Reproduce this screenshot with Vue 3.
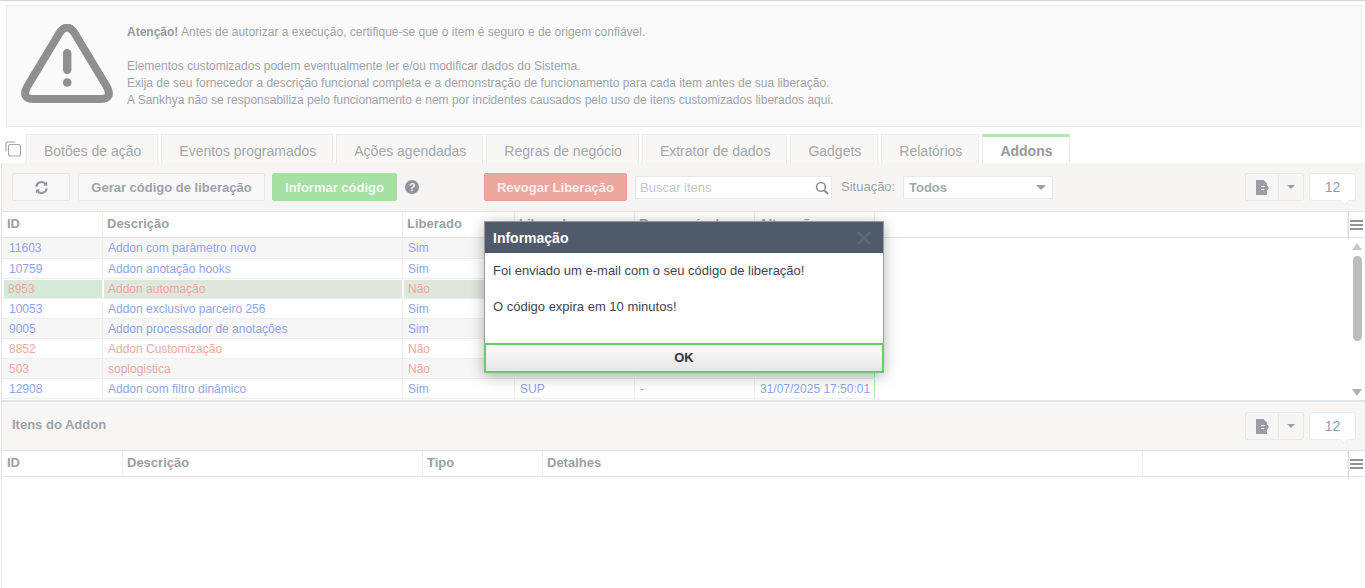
<script setup>
const tabs = ['Botões de ação', 'Eventos programados', 'Ações agendadas', 'Regras de negócio', 'Extrator de dados', 'Gadgets', 'Relatórios', 'Addons']
const cols = ['ID', 'Descrição', 'Liberado', 'Liberado por', 'Responsável', 'Alteração']
const rows = [
  { id: '11603', d: 'Addon com parâmetro novo', l: 'Sim', cls: 'alt first' },
  { id: '10759', d: 'Addon anotação hooks', l: 'Sim', cls: '' },
  { id: '8953', d: 'Addon automação', l: 'Não', cls: 'no sel' },
  { id: '10053', d: 'Addon exclusivo parceiro 256', l: 'Sim', cls: '' },
  { id: '9005', d: 'Addon processador de anotações', l: 'Sim', cls: 'alt' },
  { id: '8852', d: 'Addon Customização', l: 'Não', cls: 'no' },
  { id: '503', d: 'soplogistica', l: 'Não', cls: 'no alt' },
  { id: '12908', d: 'Addon com filtro dinâmico', l: 'Sim', cls: '', a: 'SUP', b: '-', c: '31/07/2025 17:50:01' },
]
const cols2 = ['ID', 'Descrição', 'Tipo', 'Detalhes', '']
</script>

<template>
  <div class="page">
    <section class="warn">
      <svg class="warn-icon" viewBox="21 24 92 80" width="92" height="80">
        <path d="M59.5 33Q67 22 74.5 33L107 87Q113 99 100 99L34 99Q21 99 27 87Z" fill="none" stroke="#8f8f8f" stroke-width="8" stroke-linejoin="round" />
        <rect x="63" y="49" width="8.4" height="25" rx="4.2" fill="#8f8f8f" />
        <circle cx="67.2" cy="82.5" r="4.3" fill="#8f8f8f" />
      </svg>
      <div class="warn-text">
        <p><b>Atenção!</b> Antes de autorizar a execução, certifique-se que o item é seguro e de origem confiável.</p>
        <p class="gap">Elementos customizados podem eventualmente ler e/ou modificar dados do Sistema.</p>
        <p>Exija de seu fornecedor a descrição funcional completa e a demonstração de funcionamento para cada item antes de sua liberação.</p>
        <p>A Sankhya não se responsabiliza pelo funcionamento e nem por incidentes causados pelo uso de itens customizados liberados aqui.</p>
      </div>
    </section>

    <nav class="tabs">
      <svg class="copy" viewBox="0 0 16 16" width="16" height="16" fill="none" stroke="#a2a4a8" stroke-width="1.1">
        <path d="M1 10.500V3A2 2 0 0 1 3 1H10.500" />
        <rect x="3.500" y="3.500" width="12" height="11.500" rx="2" fill="#fff" />
      </svg>
      <div v-for="t in tabs" :key="t" class="tab" :class="{ active: t === 'Addons' }">{{ t }}</div>
    </nav>

    <main class="panel">
      <div class="toolbar">
        <button class="btn refresh">
          <svg viewBox="0 0 16 16" width="15" height="15" fill="none" stroke="#92959b" stroke-width="2.200">
            <path d="M2.500 7A5.600 5.600 0 0 1 12.500 4.300" />
            <path d="M13.500 9A5.600 5.600 0 0 1 3.500 11.700" />
            <path d="M14 1.500V6H9.700L14 1.500ZM2 14.500V10H6.300L2 14.500Z" fill="#92959b" stroke="none" />
          </svg>
        </button>
        <button class="btn gerar">Gerar código de liberação</button>
        <button class="btn informar">Informar código</button>
        <span class="help">?</span>
        <button class="btn revogar">Revogar Liberação</button>
        <div class="search">
          <span>Buscar itens</span>
          <svg viewBox="0 0 16 16" width="14" height="14" fill="none" stroke="#8d9096" stroke-width="1.800">
            <circle cx="6.800" cy="6.800" r="5" />
            <path d="M10.500 10.500L14.800 14.800" stroke-width="2.400" />
          </svg>
        </div>
        <span class="sit">Situação:</span>
        <div class="select"><span>Todos</span><i class="caret big"></i></div>
        <div class="right-tools">
          <div class="split">
            <span class="split-a">
              <svg viewBox="0 0 13 15" width="13" height="15">
                <path d="M0 0H7.500L11 3.500V5L13 8L11 11V15H0Z" fill="#9a9da6" />
                <path d="M5 6.500H9M5 9.500H8" stroke="#f6f5f4" stroke-width="1" />
              </svg>
            </span>
            <span class="split-b"><i class="caret"></i></span>
          </div>
          <div class="count">12</div>
        </div>
      </div>

      <div class="tbl top-tbl">
        <div class="thead">
          <div v-for="c in cols" :key="c" class="th">{{ c }}</div>
          <div class="th fill"></div>
          <div class="menu"><i></i><i></i><i></i></div>
        </div>
        <div class="tbody">
          <div v-for="r in rows" :key="r.id" class="tr" :class="r.cls">
            <div class="td">{{ r.id }}</div>
            <div class="td">{{ r.d }}</div>
            <div class="td">{{ r.l }}</div>
            <div class="td">{{ r.a }}</div>
            <div class="td">{{ r.b }}</div>
            <div class="td last">{{ r.c }}</div>
          </div>
          <div class="scrollbar">
            <i class="up"></i>
            <i class="thumb"></i>
            <i class="down"></i>
          </div>
        </div>
      </div>

      <div class="toolbar second">
        <h2>Itens do Addon</h2>
        <div class="right-tools">
          <div class="split">
            <span class="split-a">
              <svg viewBox="0 0 13 15" width="13" height="15">
                <path d="M0 0H7.500L11 3.500V5L13 8L11 11V15H0Z" fill="#9a9da6" />
                <path d="M5 6.500H9M5 9.500H8" stroke="#f6f5f4" stroke-width="1" />
              </svg>
            </span>
            <span class="split-b"><i class="caret"></i></span>
          </div>
          <div class="count">12</div>
        </div>
      </div>
      <div class="tbl items">
        <div class="thead">
          <div v-for="(c, i) in cols2" :key="i" class="th">{{ c }}</div>
          <div class="menu"><i></i><i></i><i></i></div>
        </div>
      </div>
    </main>

    <div class="modal">
      <header class="modal-head">
        <span>Informação</span>
        <svg viewBox="0 0 14 14" width="14" height="14" stroke="#5f6a7a" stroke-width="2.400">
          <path d="M1 1L13 13M13 1L1 13" />
        </svg>
      </header>
      <div class="modal-body">
        <p>Foi enviado um e-mail com o seu código de liberação!</p>
        <p>O código expira em 10 minutos!</p>
      </div>
      <button class="ok">OK</button>
    </div>
  </div>
</template>

<style>
html, body { margin: 0; background: #fff; }
</style>

<style scoped>
.page {
  position: relative;
  width: 1365px;
  height: 588px;
  overflow: hidden;
  box-sizing: border-box;
  border-top: 1px solid #d6d6d6;
  background: #fff;
  font-family: "Liberation Sans", Arial, sans-serif;
  font-size: 12px;
  color: #a0a3a9;
}
p { margin: 0; }
button { font-family: inherit; cursor: default; }

.warn {
  display: flex;
  box-sizing: border-box;
  height: 122px;
  margin: 4px 3px 0 6px;
  border: 1px solid #e8e8e8;
  background: #fafafa;
}
.warn-icon { margin: 18px 0 0 14px; flex: none; }
.warn-text { margin: 18px 0 0 14px; line-height: 17px; }
.warn-text b { color: #96999f; }
.warn-text .gap { margin-top: 17px; }

.tabs {
  display: flex;
  align-items: stretch;
  height: 29px;
  margin-top: 7px;
  padding-left: 5px;
}
.copy { flex: none; margin: 7px 5px 0 0; }
.tab {
  box-sizing: border-box;
  padding: 7px 16px 0 17px;
  margin-right: 3px;
  border: 1px solid #ebebeb;
  border-bottom: 0;
  background: #f8f7f6;
  font-size: 14px;
  line-height: 18px;
  color: #a4a7ac;
  white-space: nowrap;
}
.tab.active {
  border-top: 3px solid #b3e8ac;
  padding: 5px 17px 0;
  background: #fff;
  font-weight: 700;
  color: #96999f;
}

.panel {
  margin-left: 1px;
  height: 425px;
  border-left: 1px solid #e2e2e2;
}
.toolbar {
  display: flex;
  align-items: flex-start;
  box-sizing: border-box;
  height: 48px;
  padding: 10px 9px 0 10px;
  background: #f6f5f4;
}
.btn {
  box-sizing: border-box;
  height: 28px;
  padding: 0;
  border: 1px solid #e8e8e8;
  border-radius: 2px;
  background: #f8f8f8;
  font-size: 13px;
  font-weight: 700;
  color: #a0a3a8;
}
.refresh { width: 58px; display: flex; align-items: center; justify-content: center; }
.gerar { width: 187px; margin-left: 8px; }
.informar { width: 125px; margin-left: 7px; background: #a6e0a2; border-color: #a6e0a2; color: #f2faf0; }
.help {
  width: 14px;
  height: 14px;
  margin: 7px 0 0 8px;
  border-radius: 50%;
  background: #8f939b;
  color: #f6f5f4;
  font-size: 11px;
  font-weight: 700;
  line-height: 14px;
  text-align: center;
}
.revogar { width: 143px; margin-left: 65px; background: #eca79f; border-color: #e89d95; color: #fbeeec; }
.search {
  display: flex;
  align-items: center;
  justify-content: space-between;
  box-sizing: border-box;
  width: 197px;
  height: 23px;
  margin: 3px 0 0 8px;
  padding: 0 0 0 4px;
  border: 1px solid #e8e8e8;
  background: #fff;
  font-size: 13px;
  color: #c4c5c7;
}
.search svg { margin-right: 2px; }
.sit { margin: 6px 0 0 9px; font-size: 13px; line-height: 16px; width: 62px; flex: none; }
.select {
  display: flex;
  align-items: center;
  justify-content: space-between;
  box-sizing: border-box;
  width: 150px;
  height: 23px;
  margin-top: 3px;
  padding: 0 6px 0 5px;
  border: 1px solid #e8e8e8;
  background: #fff;
  font-size: 13px;
  font-weight: 700;
  color: #a4a7ac;
}
.caret {
  display: block;
  border-left: 4px solid transparent;
  border-right: 4px solid transparent;
  border-top: 4px solid #9c9fa4;
}
.caret.big { border-left-width: 5px; border-right-width: 5px; border-top-width: 5px; }
.right-tools { display: flex; margin-left: auto; }
.split {
  display: flex;
  box-sizing: border-box;
  width: 59px;
  height: 28px;
  border: 1px solid #e8e8e8;
  border-radius: 2px;
  background: #f6f5f4;
}
.split-a {
  display: flex;
  align-items: center;
  justify-content: center;
  width: 32px;
  border-right: 1px solid #e8e8e8;
}
.split-b { flex: 1; display: flex; align-items: center; justify-content: center; }
.count {
  position: relative;
  box-sizing: border-box;
  width: 47px;
  height: 28px;
  margin-left: 5px;
  border: 1px solid #ececec;
  border-radius: 3px;
  background: #fff;
  font-size: 14px;
  line-height: 26px;
  text-align: center;
  color: #8c9fb5;
}
.count::after {
  content: "";
  position: absolute;
  left: 31px;
  bottom: -4px;
  width: 6px;
  height: 6px;
  background: #fff;
  border-right: 1px solid #ececec;
  border-bottom: 1px solid #ececec;
  transform: rotate(45deg);
}

.thead {
  position: relative;
  display: flex;
  box-sizing: border-box;
  height: 27px;
  border-top: 1px solid #e3e3e3;
  border-bottom: 1px solid #e3e3e3;
  background: #fff;
}
.thead::after {
  content: "";
  position: absolute;
  left: 1346px;
  top: 0;
  width: 1px;
  height: 28px;
  background: #dcdcdc;
}
.th {
  box-sizing: border-box;
  padding-left: 4px;
  border-right: 1px solid #ededed;
  font-size: 13px;
  font-weight: 700;
  line-height: 24px;
  color: #9c9fa5;
  white-space: nowrap;
  overflow: hidden;
}
.th:first-child { padding-left: 5px; }
.th.fill { flex: none; width: 473px; }
.top-tbl .th:nth-child(1) { width: 101px; }
.top-tbl .th:nth-child(2) { width: 300px; }
.top-tbl .th:nth-child(3) { width: 112px; }
.top-tbl .th:nth-child(4) { width: 120px; }
.top-tbl .th:nth-child(5) { width: 120px; }
.top-tbl .th:nth-child(6) { width: 120px; }
.items .th:nth-child(1) { width: 121px; }
.items .th:nth-child(2) { width: 300px; }
.items .th:nth-child(3) { width: 120px; }
.items .th:nth-child(4) { width: 600px; }
.items .th:nth-child(5) { width: 205px; }
.menu {
  display: flex;
  flex-direction: column;
  gap: 2px;
  width: 13px;
  margin: 8px 0 0 2px;
}
.menu i { display: block; height: 2px; background: #8f939b; }

.tbody {
  position: relative;
  height: 162px;
  border-bottom: 2px solid #dfe3e6;
  box-sizing: content-box;
}
.tr {
  display: flex;
  width: 873px;
  height: 20px;
  box-sizing: border-box;
  border-bottom: 1px solid #eeeeee;
  color: #8ea4ef;
  line-height: 20px;
}
.tr.first { height: 21px; }
.td {
  box-sizing: border-box;
  padding-left: 5px;
  height: 100%;
  border-right: 1px solid #efefef;
  white-space: nowrap;
}
.td:nth-child(1) { width: 101px; padding-left: 7px; }
.td:nth-child(2) { width: 300px; }
.td:nth-child(3) { width: 112px; padding-left: 5px; }
.td:nth-child(4) { width: 120px; padding-left: 5px; }
.td:nth-child(5) { width: 120px; padding-left: 5px; }
.td:nth-child(6) { width: 120px; padding-left: 5px; border-right: 1px solid #b4e6ae; }
.tr.alt { background: #f6f6f6; }
.tr.no { color: #f0a89e; }
.tr.sel { background: #fff; border-bottom-color: #eee; }
.tr.sel .td {
  height: 18px;
  margin-top: 1px;
  line-height: 18px;
  background: #dfe7dd;
  border-left: 1px solid #fff;
  border-right: 1px solid #fff;
  padding-left: 4px;
}
.tr.sel .td:first-child { background: #d6eada; margin-left: 2px; width: 99px; padding-left: 4px; border-left: 0; }
.scrollbar { position: absolute; top: 0; right: 0; width: 15px; height: 162px; }
.scrollbar i { position: absolute; display: block; }
.up {
  left: 2px;
  top: 5px;
  border-left: 5px solid transparent;
  border-right: 5px solid transparent;
  border-bottom: 7px solid #c8c8c8;
}
.thumb { left: 3px; top: 18px; width: 9px; height: 85px; border-radius: 5px; background: #bdbdbd; }
.down {
  left: 2px;
  top: 151px;
  border-left: 5px solid transparent;
  border-right: 5px solid transparent;
  border-top: 7px solid #b0b0b0;
}

.second { background: #f8f6f5; }
.second h2 {
  margin: 5px 0 0;
  font-size: 13px;
  line-height: 16px;
  font-weight: 700;
  color: #a0a3a8;
}

.modal {
  position: absolute;
  left: 484px;
  top: 220px;
  box-sizing: border-box;
  width: 400px;
  height: 152px;
  display: flex;
  flex-direction: column;
  border: 1px solid #9a9a9a;
  border-bottom: 0;
  background: #fff;
  box-shadow: 0 3px 14px rgba(0, 0, 0, 0.3);
}
.modal-head {
  display: flex;
  align-items: center;
  justify-content: space-between;
  flex: none;
  height: 31px;
  padding: 0 12px 0 8px;
  background: #4f5a6b;
  font-size: 14px;
  font-weight: 700;
  color: #fff;
}
.modal-body {
  flex: 1;
  padding: 9px 8px 0;
  font-size: 13px;
  line-height: 18px;
  color: #3f4651;
}
.modal-body p + p { margin-top: 18px; }
.ok {
  flex: none;
  box-sizing: border-box;
  width: 400px;
  height: 30px;
  margin-left: -1px;
  padding: 0 0 2px;
  border: 2px solid #66cc66;
  background: linear-gradient(#fbfbfb, #e6e6e6);
  font-size: 13px;
  font-weight: 700;
  color: #2f3642;
}
</style>
